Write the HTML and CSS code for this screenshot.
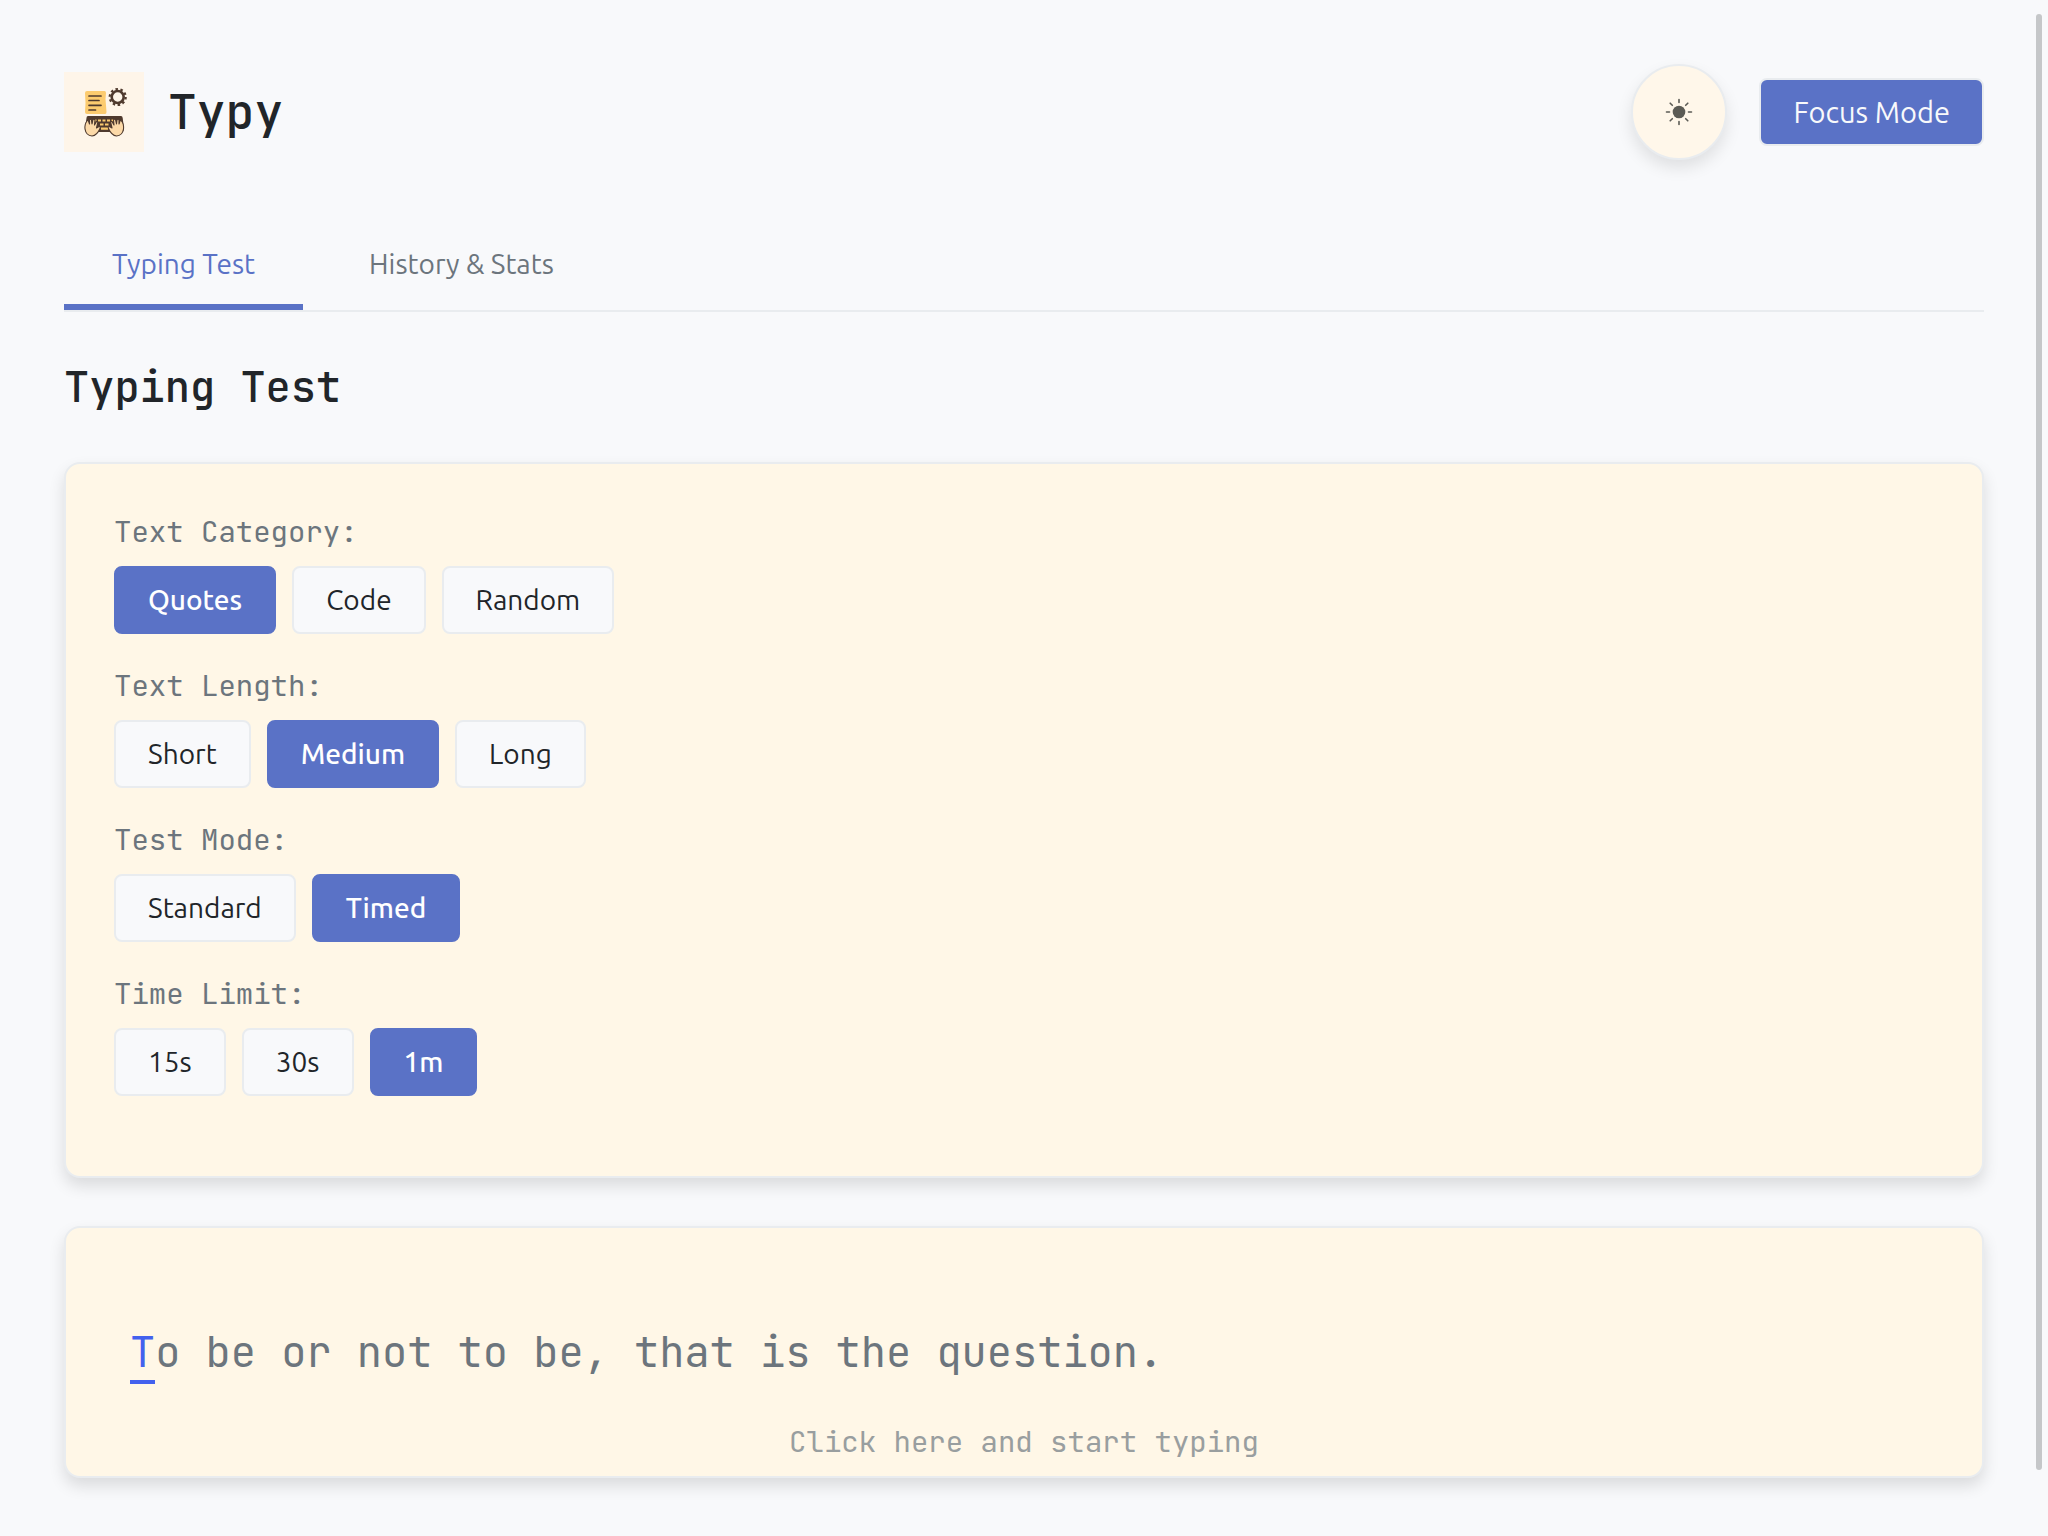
FILE: index.html
```html
<!DOCTYPE html>
<html lang="en">
<head>
<meta charset="utf-8">
<title>Typy</title>
<link rel="stylesheet" href="styles.css">
</head>
<body>
<div class="app">
  <header class="header">
    <div class="brand">
      <svg class="logo" viewBox="0 0 80 80" aria-hidden="true">
        <rect width="80" height="80" fill="#fef5e9"/>
        <path d="M23 19H40.500Q42 19 42 21L41.500 27L42.500 40Q42.500 42 41 42H23Q21 42 21 40L21.500 31L21 21Q21 19 23 19Z" fill="#fccb6f"/>
        <path d="M25 24H37M25 28.500H35M25 33.300H37M25 38H31.500" stroke="#4f3a2e" stroke-width="1.700" stroke-linecap="round"/>
        <circle cx="53.700" cy="25" r="6" fill="none" stroke="#4f3a2e" stroke-width="2.600"/>
        <circle cx="53.700" cy="25" r="8" fill="none" stroke="#4f3a2e" stroke-width="2.200" stroke-dasharray="2.500 2.526"/>
        <path d="M24 44H57Q58.500 44 58.700 46L60 57Q60 60 57 60H24Q21 60 21 57L22.500 46Q22.500 44 24 44Z" fill="#4f3a2e"/>
        <path d="M34 47.500h3v2h-3zM38.500 47.500h3v2h-3zM43 47.500h3v2h-3zM36 51.500h3.500v2h-3.500zM41 51.500h3.500v2H41zM37 55.500h7v2.200h-7zM47.500 47.500h2v2h-2zM30.500 47.500h2v2h-2z" fill="#fccb6f"/>
        <path id="hand" d="M21 57Q20.500 52 23 49Q23.500 47.500 24.500 49L25.500 52L25.500 48Q26.500 46.500 27.500 48L28 52L29 47.500Q30 46.500 31 48L30.500 53L32.500 49.500Q33.800 49 33.800 50.500L32.500 56L35 54.500Q37 54.500 36 56.500Q33 63.500 28 64Q22 63.500 21 57Z" fill="#fcd9a8" stroke="#4f3a2e" stroke-width="1.100" stroke-linejoin="round"/>
        <use href="#hand" transform="matrix(-1 0 0 1 80.500 0)"/>
      </svg>
      <h1 class="brand-name">Typy</h1>
    </div>
    <div class="actions">
      <button class="theme-toggle" type="button" aria-label="Toggle theme">
        <svg class="sun" viewBox="0 0 28 28" aria-hidden="true">
          <circle cx="14" cy="14" r="6.300" fill="#5b5b55"/>
          <path d="M14 1.500V4.500M14 23.500V26.500M1.500 14H4.500M23.500 14H26.500M5.200 5.200L7.300 7.300M20.700 20.700L22.800 22.800M5.200 22.800L7.300 20.700M20.700 7.300L22.800 5.200" stroke="#5b5b55" stroke-width="1.600" stroke-linecap="round"/>
        </svg>
      </button>
      <button class="focus-button" type="button">Focus Mode</button>
    </div>
  </header>

  <nav class="tabs">
    <button class="tab active" type="button">Typing Test</button>
    <button class="tab" type="button">History &amp; Stats</button>
  </nav>

  <main>
    <h2 class="page-title">Typing Test</h2>

    <section class="card options">
      <div class="group" role="group" aria-labelledby="category">
        <h3 class="group-label" id="category">Text Category:</h3>
        <div class="choices">
          <button class="choice selected" type="button">Quotes</button>
          <button class="choice" type="button">Code</button>
          <button class="choice" type="button">Random</button>
        </div>
      </div>
      <div class="group" role="group" aria-labelledby="length">
        <h3 class="group-label" id="length">Text Length:</h3>
        <div class="choices">
          <button class="choice" type="button">Short</button>
          <button class="choice selected" type="button">Medium</button>
          <button class="choice" type="button">Long</button>
        </div>
      </div>
      <div class="group" role="group" aria-labelledby="mode">
        <h3 class="group-label" id="mode">Test Mode:</h3>
        <div class="choices">
          <button class="choice" type="button">Standard</button>
          <button class="choice selected" type="button">Timed</button>
        </div>
      </div>
      <div class="group" role="group" aria-labelledby="limit">
        <h3 class="group-label" id="limit">Time Limit:</h3>
        <div class="choices">
          <button class="choice" type="button">15s</button>
          <button class="choice" type="button">30s</button>
          <button class="choice selected" type="button">1m</button>
        </div>
      </div>
    </section>

    <section class="card typing" tabindex="0">
      <p class="passage"><span class="current">T</span>o be or not to be, that is the question.</p>
      <p class="hint">Click here and start typing</p>
    </section>
  </main>
</div>
<div class="scroll-thumb"></div>
</body>
</html>
```
FILE: styles.css
```css
:root {
  --primary: #5a72c6;
  --cursor: #4361ee;
  --page: #f8f9fb;
  --cream: #fff7e7;
  --line: #e9ecef;
  --ink: #212529;
  --muted: #6c757d;
  --sans: "Ubuntu", "Noto Sans", sans-serif;
  --mono: "JetBrains Mono", "DejaVu Sans Mono", monospace;
}

* {
  box-sizing: border-box;
}

body {
  margin: 0;
  background: var(--page);
  color: var(--ink);
  font-family: var(--mono);
}

h1, h2, h3, p {
  margin: 0;
  font-weight: 400;
}

button {
  margin: 0;
  font-family: var(--sans);
  font-size: 28px;
  line-height: 36px;
  cursor: pointer;
}

.app {
  padding: 64px 64px 58px;
}

.header {
  display: flex;
  align-items: center;
  justify-content: space-between;
}

.brand {
  display: flex;
  align-items: center;
  gap: 24px;
}

.logo {
  width: 80px;
  height: 80px;
}

.brand-name {
  font-size: 48px;
  font-weight: 500;
  line-height: 64px;
}

.actions {
  display: flex;
  align-items: center;
  gap: 32px;
}

.theme-toggle {
  display: grid;
  place-items: center;
  width: 96px;
  height: 96px;
  padding: 0;
  border: 2px solid var(--line);
  border-radius: 50%;
  background: #fff7ea;
  box-shadow: 0 8px 16px rgba(0, 0, 0, 0.1);
}

.sun {
  width: 28px;
  height: 28px;
}

.focus-button {
  padding: 14px 32px;
  border: 2px solid var(--line);
  border-radius: 8px;
  background: var(--primary);
  color: var(--page);
  font-size: 29px;
}

.tabs {
  display: flex;
  gap: 18px;
  margin-top: 56px;
  border-bottom: 2px solid var(--line);
}

.tab {
  padding: 30px 48px 22px;
  border: 0;
  border-bottom: 6px solid transparent;
  background: none;
  color: var(--muted);
}

.tab.active {
  border-bottom-color: var(--primary);
  color: var(--primary);
}

.page-title {
  margin-top: 43px;
  font-size: 42px;
  font-weight: 500;
  line-height: 64px;
}

.card {
  border: 2px solid var(--line);
  border-radius: 16px;
  background: var(--cream);
  box-shadow: 0 8px 16px rgba(0, 0, 0, 0.12);
}

.options {
  margin-top: 43px;
  padding: 48px 48px 80px;
  display: grid;
  gap: 32px;
}

.group {
  display: grid;
  gap: 14px;
}

.group-label {
  color: var(--muted);
  font-size: 29px;
  line-height: 40px;
}

.choices {
  display: flex;
  flex-wrap: wrap;
  gap: 16px;
}

.choice {
  padding: 14px 32px;
  border: 2px solid var(--line);
  border-radius: 8px;
  background: var(--page);
  color: var(--ink);
}

.choice.selected {
  border-color: var(--primary);
  background: var(--primary);
  color: #fff;
  font-weight: 500;
}

.typing {
  margin-top: 48px;
  padding: 86px 64px 11px;
}

.passage {
  color: var(--muted);
  font-size: 42px;
  line-height: 76px;
}

.current {
  border-bottom: 4px solid var(--cursor);
  color: var(--cursor);
}

.hint {
  margin-top: 29px;
  color: #999e9f;
  font-size: 29px;
  line-height: 46px;
  text-align: center;
}

/* Overlay scrollbar thumb */
.scroll-thumb {
  position: fixed;
  top: 14px;
  right: 6px;
  bottom: 66px;
  width: 6px;
  border-radius: 3px;
  background: #c5c7c9;
}
```
